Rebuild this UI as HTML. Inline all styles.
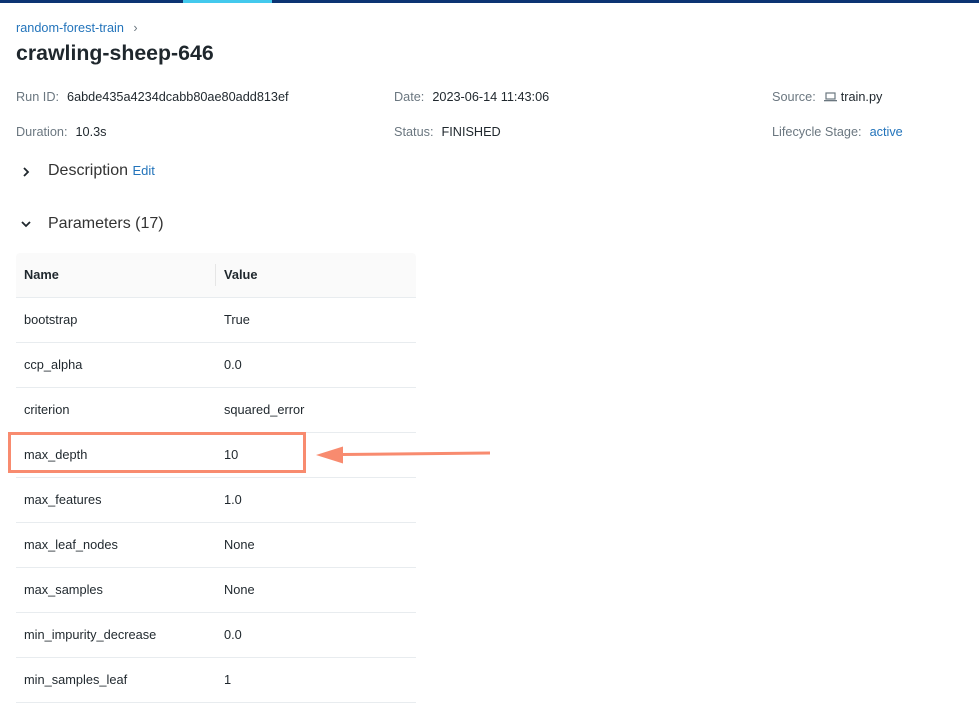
<!DOCTYPE html>
<html><head><style>
*{margin:0;padding:0;box-sizing:border-box}
body{width:979px;height:697px;overflow:hidden;background:#fff;font-family:"Liberation Sans",sans-serif;color:#1f272d;position:relative}
.bar{position:absolute;top:0;height:3px}
.a{position:absolute;white-space:nowrap}
.lbl{color:#6b7780;font-size:12.7px}
.val{font-size:12.7px;color:#1f272d}
.row{position:absolute;left:16px;width:400px;height:45px;border-bottom:1px solid #e8ecef;font-size:12.8px}
.row span{position:absolute;top:14px}
</style></head><body>
<div class="bar" style="left:0;width:183px;background:#0c3473"></div>
<div class="bar" style="left:183px;width:89px;background:#43c9ed"></div>
<div class="bar" style="left:272px;width:707px;background:#0c3473"></div>

<div class="a" style="left:16px;top:21px;font-size:12.7px;color:#2374bb">random-forest-train <span style="color:#6b7780;margin-left:6px">›</span></div>
<div class="a" style="left:16px;top:41px;font-size:21.3px;font-weight:bold">crawling-sheep-646</div>

<div class="a lbl" style="left:16px;top:90px">Run ID:<span class="val" style="margin-left:8px">6abde435a4234dcabb80ae80add813ef</span></div>
<div class="a lbl" style="left:394px;top:90px">Date:<span class="val" style="margin-left:8px">2023-06-14 11:43:06</span></div>
<div class="a lbl" style="left:772px;top:90px">Source:<span class="val" style="margin-left:8px"><svg width="13" height="10" viewBox="0 0 13 10" style="vertical-align:-1px;margin-right:4px"><rect x="2" y="1" width="9" height="6" fill="none" stroke="#6b7780" stroke-width="1.2"/><rect x="0" y="8" width="13" height="1.3" fill="#6b7780"/></svg>train.py</span></div>

<div class="a lbl" style="left:16px;top:125px">Duration:<span class="val" style="margin-left:8px">10.3s</span></div>
<div class="a lbl" style="left:394px;top:125px">Status:<span class="val" style="margin-left:8px">FINISHED</span></div>
<div class="a lbl" style="left:772px;top:125px">Lifecycle Stage:<span style="margin-left:8px;color:#2374bb">active</span></div>

<svg class="a" style="left:21px;top:166px" width="10" height="12" viewBox="0 0 10 12"><path d="M3 2l4 4-4 4" fill="none" stroke="#1f272d" stroke-width="1.8"/></svg>
<div class="a" style="left:48px;top:162px;font-size:16px;color:#333">Description <span style="font-size:13px;color:#2374bb">Edit</span></div>

<svg class="a" style="left:20px;top:219px" width="12" height="10" viewBox="0 0 12 10"><path d="M2 3l4 4 4-4" fill="none" stroke="#1f272d" stroke-width="1.8"/></svg>
<div class="a" style="left:48px;top:215px;font-size:16px;color:#333">Parameters (17)</div>

<div class="a" style="left:16px;top:253px;width:400px;height:45px;background:#fafafa;border-bottom:1px solid #e8ecef;border-radius:4px 4px 0 0;font-size:12.8px;font-weight:bold">
<span class="a" style="left:8px;top:14px">Name</span>
<span class="a" style="left:199px;top:11px;width:1px;height:22px;background:#e6e6e6"></span>
<span class="a" style="left:208px;top:14px">Value</span>
</div>

<div class="row" style="top:298px"><span style="left:8px">bootstrap</span><span style="left:208px">True</span></div>
<div class="row" style="top:343px"><span style="left:8px">ccp_alpha</span><span style="left:208px">0.0</span></div>
<div class="row" style="top:388px"><span style="left:8px">criterion</span><span style="left:208px">squared_error</span></div>
<div class="row" style="top:433px"><span style="left:8px">max_depth</span><span style="left:208px">10</span></div>
<div class="row" style="top:478px"><span style="left:8px">max_features</span><span style="left:208px">1.0</span></div>
<div class="row" style="top:523px"><span style="left:8px">max_leaf_nodes</span><span style="left:208px">None</span></div>
<div class="row" style="top:568px"><span style="left:8px">max_samples</span><span style="left:208px">None</span></div>
<div class="row" style="top:613px"><span style="left:8px">min_impurity_decrease</span><span style="left:208px">0.0</span></div>
<div class="row" style="top:658px"><span style="left:8px">min_samples_leaf</span><span style="left:208px">1</span></div>

<div class="a" style="left:8px;top:432px;width:298px;height:41px;border:3px solid #f88b6f"></div>
<svg class="a" style="left:310px;top:440px" width="185" height="30" viewBox="0 0 185 30"><path d="M32 14.5L180 13" stroke="#f88b6f" stroke-width="3" fill="none"/><path d="M6 15L33 6.5 33 23.5Z" fill="#f88b6f"/></svg>
</body></html>
